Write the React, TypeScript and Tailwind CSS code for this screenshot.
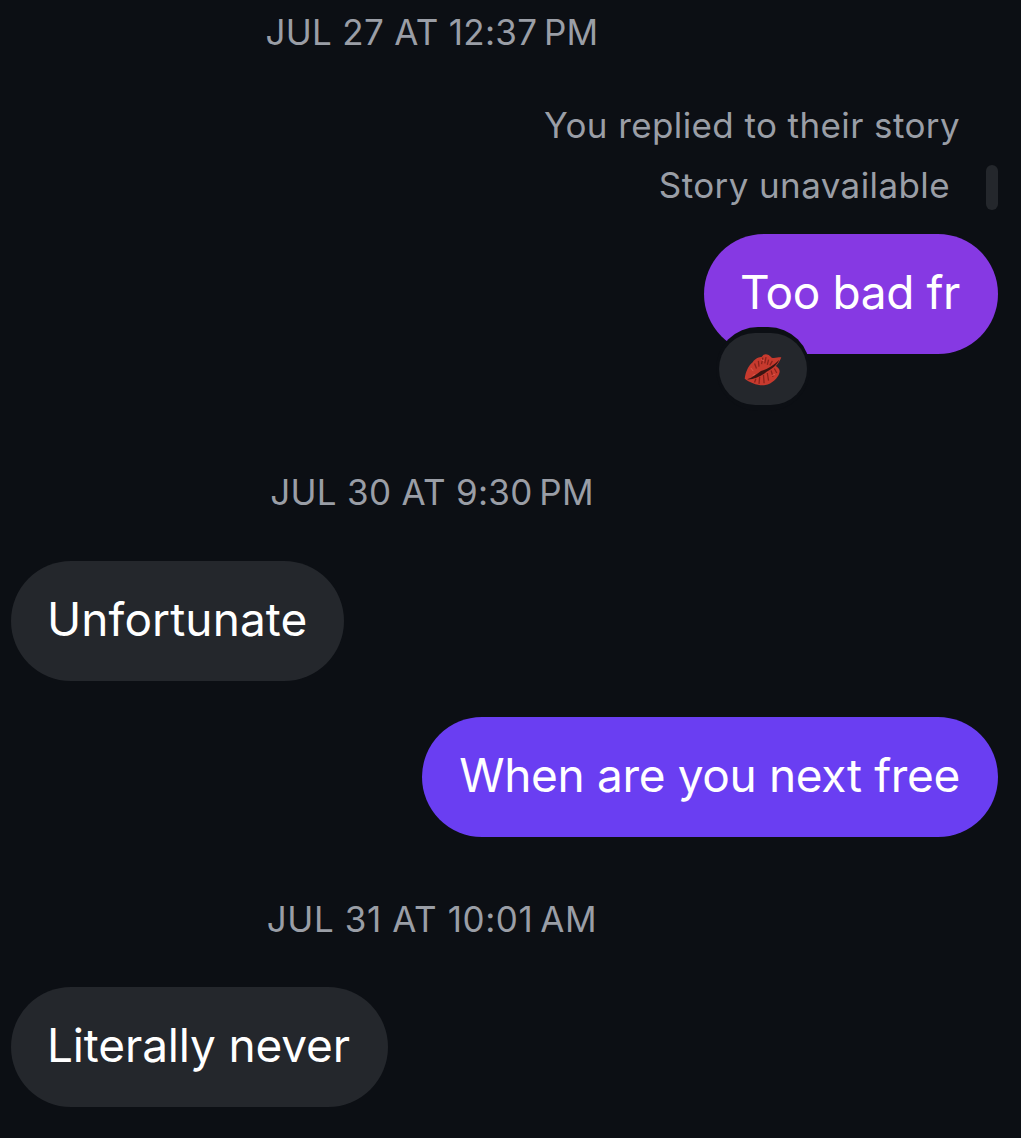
const font = { fontFamily: "Inter, 'Liberation Sans', sans-serif" };

function Stamp({ children, className }: { children: React.ReactNode; className: string }) {
  return (
    <div className={`w-[864px] text-center text-[35px] leading-[40px] tracking-[0.3px] text-[#9a9ea6] ${className}`}>
      {children}
    </div>
  );
}

function Kiss() {
  return (
    <svg viewBox="80 76 125 110" className="w-[40px] h-[35px]">
      <path d="M85 160 C88 135 98 118 110 108 C118 96 132 92 138 92 C144 80 158 80 170 94 C180 96 192 92 200 93 C196 104 188 114 183 120 C192 126 197 132 194 142 C190 158 170 176 150 180 C130 184 100 172 85 160 Z" fill="#c73a2e" />
      <path d="M92 162 C108 158 122 146 136 136 C156 130 176 118 194 100 C184 120 168 130 154 138 C136 152 112 164 92 162 Z" fill="#3a1512" />
      <path d="M116 112 L122 128 M128 104 L130 122 M142 94 L138 114 M152 92 L148 112 M160 100 L156 116 M172 104 L164 118 M120 160 L116 172 M132 154 L130 176 M144 148 L146 174 M156 142 L160 166 M168 134 L174 154 M178 128 L186 142" stroke="#8a221b" strokeWidth="4" />
      <path d="M104 126 L112 136 M136 100 L146 104 M110 150 L118 146 M170 150 L180 146" stroke="#e0574a" strokeWidth="3" />
    </svg>
  );
}

export default function App() {
  return (
    <div className="w-[1021px] h-[1138px] overflow-hidden bg-[#0c0f14] text-white" style={font}>
      <Stamp className="pt-[12px]">JUL 27 AT 12:37{"\u2009"}PM</Stamp>

      <div className="mt-[53px] pr-[61px] text-right text-[35px] leading-[40px] tracking-[0.4px] text-[#9a9ea6]">You replied to their story</div>
      <div className="mt-[20px] pr-[23px] flex justify-end items-center text-[35px] leading-[40px] tracking-[0.4px] text-[#9a9ea6]">
        <span className="-mt-[6px] mr-[-1px]">Story unavailable</span>
        <span className="ml-[37px] w-[12px] h-[45px] rounded-full bg-[#24272c]" />
      </div>

      <div className="mt-[24px] pr-[23px] flex justify-end">
        <div className="relative h-[120px] pl-[36px] pr-[38px] rounded-[60px] bg-[#8639e3] text-[46px] leading-[116px] tracking-[-0.4px]">
          Too bad fr
          <div className="absolute right-[188px] top-[93px] w-[94px] h-[84px] rounded-[42px] bg-[#0c0f14] flex items-center justify-center">
            <div className="w-[88px] h-[72px] rounded-[36px] bg-[#24272c] flex items-center justify-center">
              <Kiss />
            </div>
          </div>
        </div>
      </div>

      <Stamp className="mt-[118px]">JUL 30 AT 9:30{"\u2009"}PM</Stamp>

      <div className="mt-[49px] pl-[11px] flex">
        <div className="h-[120px] pl-[36px] pr-[37px] rounded-[60px] bg-[#24272c] text-[46px] leading-[116px] tracking-[0.1px]">Unfortunate</div>
      </div>

      <div className="mt-[36px] pr-[23px] flex justify-end">
        <div className="h-[120px] pl-[37px] pr-[38px] rounded-[60px] bg-[#6a3ef2] text-[46px] leading-[116px] tracking-[-0.35px]">When are you next free</div>
      </div>

      <Stamp className="mt-[62px] tracking-[0.6px]">JUL 31 AT 10:01{"\u2009"}AM</Stamp>

      <div className="mt-[48px] pl-[11px] flex">
        <div className="h-[120px] pl-[36px] pr-[38px] rounded-[60px] bg-[#24272c] text-[46px] leading-[116px] tracking-[-0.15px]">Literally never</div>
      </div>
    </div>
  );
}
